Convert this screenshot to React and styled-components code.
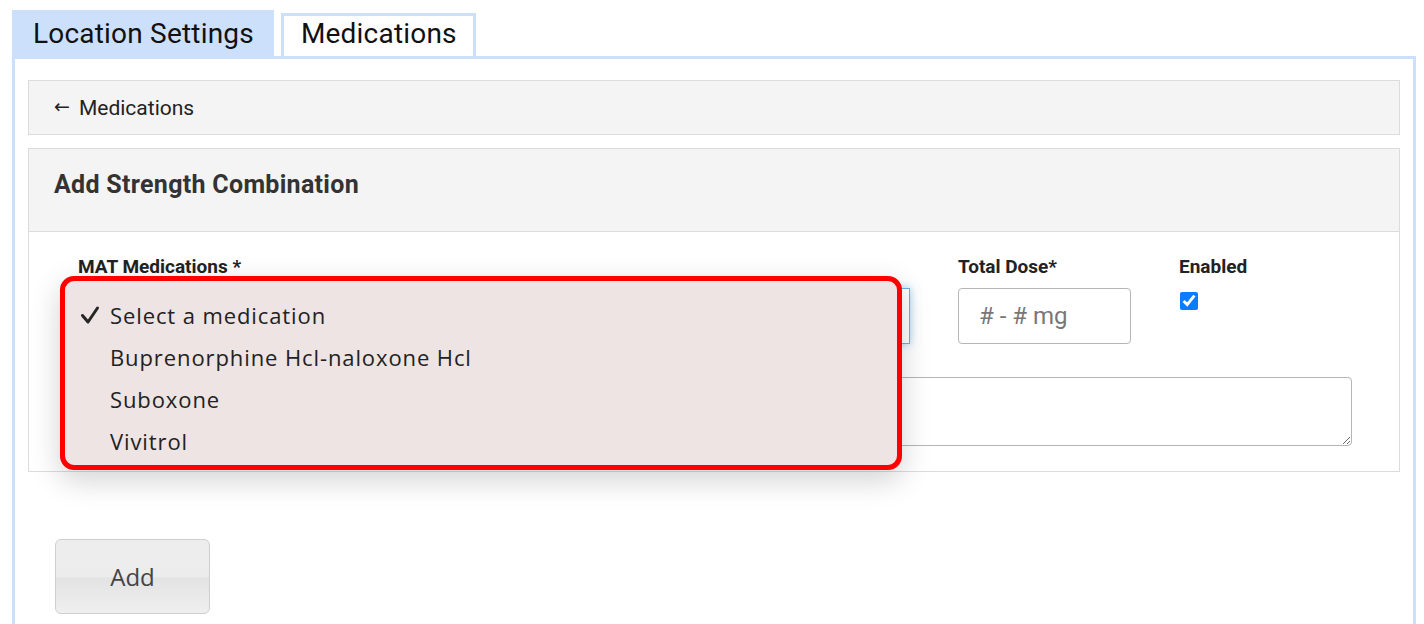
import styled, { createGlobalStyle } from 'styled-components';

const GlobalStyle = createGlobalStyle`
  html, body {
    margin: 0;
    padding: 0;
    background: #fff;
    font-family: Roboto, "Liberation Sans", Arial, sans-serif;
    color: #222;
  }
  * { box-sizing: border-box; }
`;

const medications = [
  'Select a medication',
  'Buprenorphine Hcl-naloxone Hcl',
  'Suboxone',
  'Vivitrol',
];

export default function App() {
  return (
    <>
      <GlobalStyle />
      <Page>
        <Tabs>
          <Tab active>Location Settings</Tab>
          <Tab>Medications</Tab>
        </Tabs>
        <Panel>
          <Breadcrumb>
            <Arrow>←</Arrow> Medications
          </Breadcrumb>
          <Card>
            <CardHeader>Add Strength Combination</CardHeader>
            <CardBody>
              <FieldRow>
                <Field grow>
                  <Label>MAT Medications *</Label>
                  <Select />
                  <Dropdown>
                    {medications.map((m, i) => (
                      <Option key={m}>
                        <Check>
                          {i === 0 && (
                            <svg width="20" height="20" viewBox="0 0 20 20">
                              <polyline
                                points="2.5,10.5 8,17 17.5,3"
                                fill="none"
                                stroke="#262626"
                                strokeWidth="3"
                                strokeLinecap="round"
                                strokeLinejoin="round"
                              />
                            </svg>
                          )}
                        </Check>
                        {m}
                      </Option>
                    ))}
                  </Dropdown>
                </Field>
                <Field width="173px">
                  <Label>Total Dose*</Label>
                  <Input placeholder="# - # mg" />
                </Field>
                <Field width="173px">
                  <Label>Enabled</Label>
                  <Checkbox type="checkbox" defaultChecked />
                </Field>
              </FieldRow>
              <TextArea />
            </CardBody>
          </Card>
          <AddButton>Add</AddButton>
        </Panel>
      </Page>
    </>
  );
}

const Page = styled.div`
  padding: 10px 8px 0 12px;
`;

const Tabs = styled.div`
  display: flex;
  gap: 7px;
  align-items: flex-end;
`;

const Tab = styled.div`
  font-size: 28px;
  line-height: ${(p) => (p.active ? '42px' : '36px')};
  padding: 0 ${(p) => (p.active ? '17px 0 18px' : '16px 0 17px')};
  letter-spacing: 0.2px;
  background: ${(p) => (p.active ? '#cce0fb' : '#fff')};
  border: 3px solid #cce0fb;
  border-bottom: none;
  height: ${(p) => (p.active ? '46px' : '43px')};
  color: #111;
`;

const Panel = styled.div`
  border: 3px solid #cce0fb;
  border-bottom: none;
  padding: 21px 13px 20px 13px;
  min-height: 580px;
`;

const Breadcrumb = styled.div`
  background: #f4f4f4;
  border: 1px solid #dcdcdc;
  height: 55px;
  display: flex;
  align-items: center;
  padding-left: 25px;
  font-size: 21px;
  color: #222;
  gap: 9px;
`;

const Arrow = styled.span`
  font-family: "DejaVu Sans", sans-serif;
  font-size: 19px;
  line-height: 1;
  margin-top: -2px;
`;

const Card = styled.div`
  margin-top: 13px;
  border: 1px solid #dcdcdc;
`;

const CardHeader = styled.div`
  background: #f4f4f4;
  border-bottom: 1px solid #dcdcdc;
  height: 83px;
  display: flex;
  align-items: center;
  padding-left: 25px;
  padding-bottom: 12px;
  font-size: 25px;
  font-weight: 700;
  letter-spacing: 0.3px;
  color: #333;
`;

const CardBody = styled.div`
  padding: 24px 47px 25px 49px;
  height: 239px;
`;

const FieldRow = styled.div`
  display: flex;
  gap: 48px;
`;

const Field = styled.div`
  position: relative;
  display: flex;
  flex-direction: column;
  flex: ${(p) => (p.grow ? '1' : `0 0 ${p.width}`)};
`;

const Label = styled.div`
  font-size: 19px;
  font-weight: 700;
  color: #222;
  height: 22px;
  line-height: 22px;
  margin-bottom: 10px;
  letter-spacing: 0;
`;

const Select = styled.div`
  height: 56px;
  border: 1px solid #66afe9;
  box-shadow: 0 0 8px rgba(102, 175, 233, 0.6);
  background: #fff;
`;

const Input = styled.input`
  height: 56px;
  width: 100%;
  border: 1px solid #b5b5b5;
  border-radius: 4px;
  padding: 0 20px;
  font-size: 24px;
  font-family: Roboto, sans-serif;
  &::placeholder {
    color: #777;
  }
`;

const Checkbox = styled.input`
  width: 18px;
  height: 18px;
  margin: 4px 0 0 1px;
  accent-color: #0a7cff;
`;

const TextArea = styled.textarea`
  display: block;
  margin-top: 33px;
  width: 100%;
  height: 69px;
  border: 1px solid #b5b5b5;
  border-radius: 4px;
  resize: vertical;
`;

const Dropdown = styled.div`
  position: absolute;
  top: 20px;
  left: -18px;
  width: 842px;
  height: 194px;
  background: #ede4e3;
  border: 5px solid #ff0000;
  border-radius: 14px;
  padding: 13px 0 0 14px;
  box-shadow: 0 10px 30px rgba(0, 0, 0, 0.18);
  z-index: 10;
`;

const Option = styled.div`
  display: flex;
  align-items: center;
  height: 42px;
  font-size: 22px;
  font-family: "Open Sans", "Noto Sans", sans-serif;
  color: #222;
  letter-spacing: 0.9px;
`;

const Check = styled.span`
  width: 31px;
  display: flex;
  align-items: center;
  padding-left: 1px;
`;

const AddButton = styled.button`
  margin: 67px 0 0 27px;
  width: 155px;
  height: 75px;
  border: 1px solid #cfcfcf;
  border-radius: 6px;
  background: linear-gradient(#ededed 0%, #ececec 50%, #e3e3e3 52%, #efefef 100%);
  font-size: 24px;
  font-family: "Open Sans", "Noto Sans", sans-serif;
  color: #444;
`;
